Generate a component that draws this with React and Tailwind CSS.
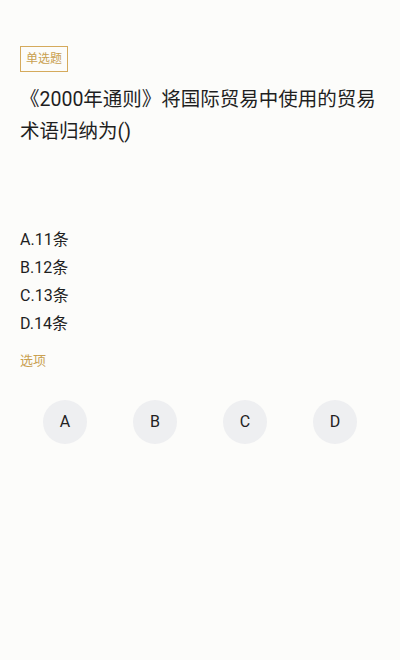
const options = [
  { key: "A", text: "11条" },
  { key: "B", text: "12条" },
  { key: "C", text: "13条" },
  { key: "D", text: "14条" },
];

export default function App() {
  return (
    <div
      className="w-[400px] h-[660px] bg-[#fcfcfa] px-5 pt-[46px] text-[#1f1f1f]"
      style={{ fontFamily: 'Roboto, "Noto Sans CJK SC", sans-serif' }}
    >
      <span className="inline-flex items-center h-[26px] px-[5px] border border-[#d5aa5c] text-[#c9a050] text-[12px]">
        单选题
      </span>

      <h1 className="mt-[12px] text-[19.5px] leading-[32px] font-normal">
        《2000年通则》将国际贸易中使用的贸易术语归纳为()
      </h1>

      <div className="mt-[78px] flex flex-col">
        {options.map((o) => (
          <p key={o.key} className="text-[16px] leading-[28px]">
            {o.key}.{o.text}
          </p>
        ))}
      </div>

      <p className="mt-[13px] text-[13px] leading-[20px] text-[#c9a050]">选项</p>

      <div className="mt-[29px] ml-[23px] flex gap-[46px]">
        {options.map((o) => (
          <button
            key={o.key}
            className="w-[44px] h-[44px] rounded-full bg-[#eeeff1] text-[16px] text-[#222]"
          >
            {o.key}
          </button>
        ))}
      </div>
    </div>
  );
}
